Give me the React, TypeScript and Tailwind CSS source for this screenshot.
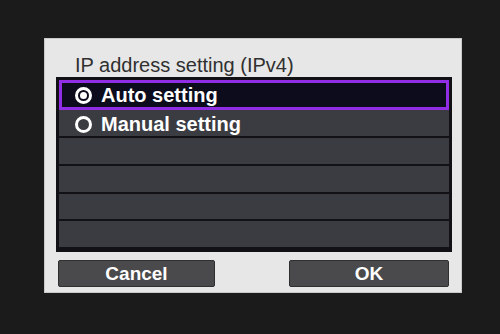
import React from 'react';

const font = { fontFamily: '"Liberation Sans", Arial, sans-serif' };

function Radio({ checked }: { checked?: boolean }) {
  return (
    <div className="w-[17px] h-[17px] rounded-full border-[3px] border-white flex items-center justify-center shrink-0">
      {checked && <div className="w-[7px] h-[7px] rounded-full bg-white"></div>}
    </div>
  );
}

export default function App() {
  const emptyRows = [0, 1, 2, 3];

  return (
    <div className="w-[500px] h-[334px] bg-[#1b1b1b] pt-[38px] pl-[44px]" style={font}>
      <div className="w-[418px] h-[255px] bg-[#e7e7e7] border border-[#c9c9c9] flex flex-col">
        {/* Title */}
        <div className="pt-[14px] pl-[30px] h-[38px] text-[20px] leading-[24px] text-[#303030]">
          IP address setting (IPv4)
        </div>

        {/* Options list */}
        <div className="ml-[11px] w-[396px] h-[175px] border-[3px] border-[#111116] bg-[#3b3b42] flex flex-col">
          {/* Auto setting (selected) */}
          <div className="h-[30px] border-[3px] border-[#922de6] bg-[#0c0c1c] flex items-center gap-[9px] pl-[13px] text-white font-bold text-[20px] leading-[24px]">
            <Radio checked />
            <span>Auto setting</span>
          </div>

          {/* Manual setting */}
          <div className="h-[28px] border-b-2 border-[#111116] flex items-center gap-[9px] pl-[16px] pt-[2px] text-white font-bold text-[20px] leading-[24px]">
            <Radio />
            <span>Manual setting</span>
          </div>

          {emptyRows.map((i) => (
            <div key={i} className="h-[28px] border-b-2 border-[#111116]"></div>
          ))}
          <div className="flex-1"></div>
        </div>

        {/* Buttons */}
        <div className="flex justify-between pl-[13px] pr-[12px] mt-[8px]">
          <button className="w-[157px] h-[27px] bg-[#4a4a4c] border border-[#2f2f2f] rounded-[2px] text-white font-bold text-[19px] leading-[24px] flex items-center justify-center">
            Cancel
          </button>
          <button className="w-[160px] h-[27px] bg-[#4a4a4c] border border-[#2f2f2f] rounded-[2px] text-white font-bold text-[19px] leading-[24px] flex items-center justify-center">
            OK
          </button>
        </div>
      </div>
    </div>
  );
}
